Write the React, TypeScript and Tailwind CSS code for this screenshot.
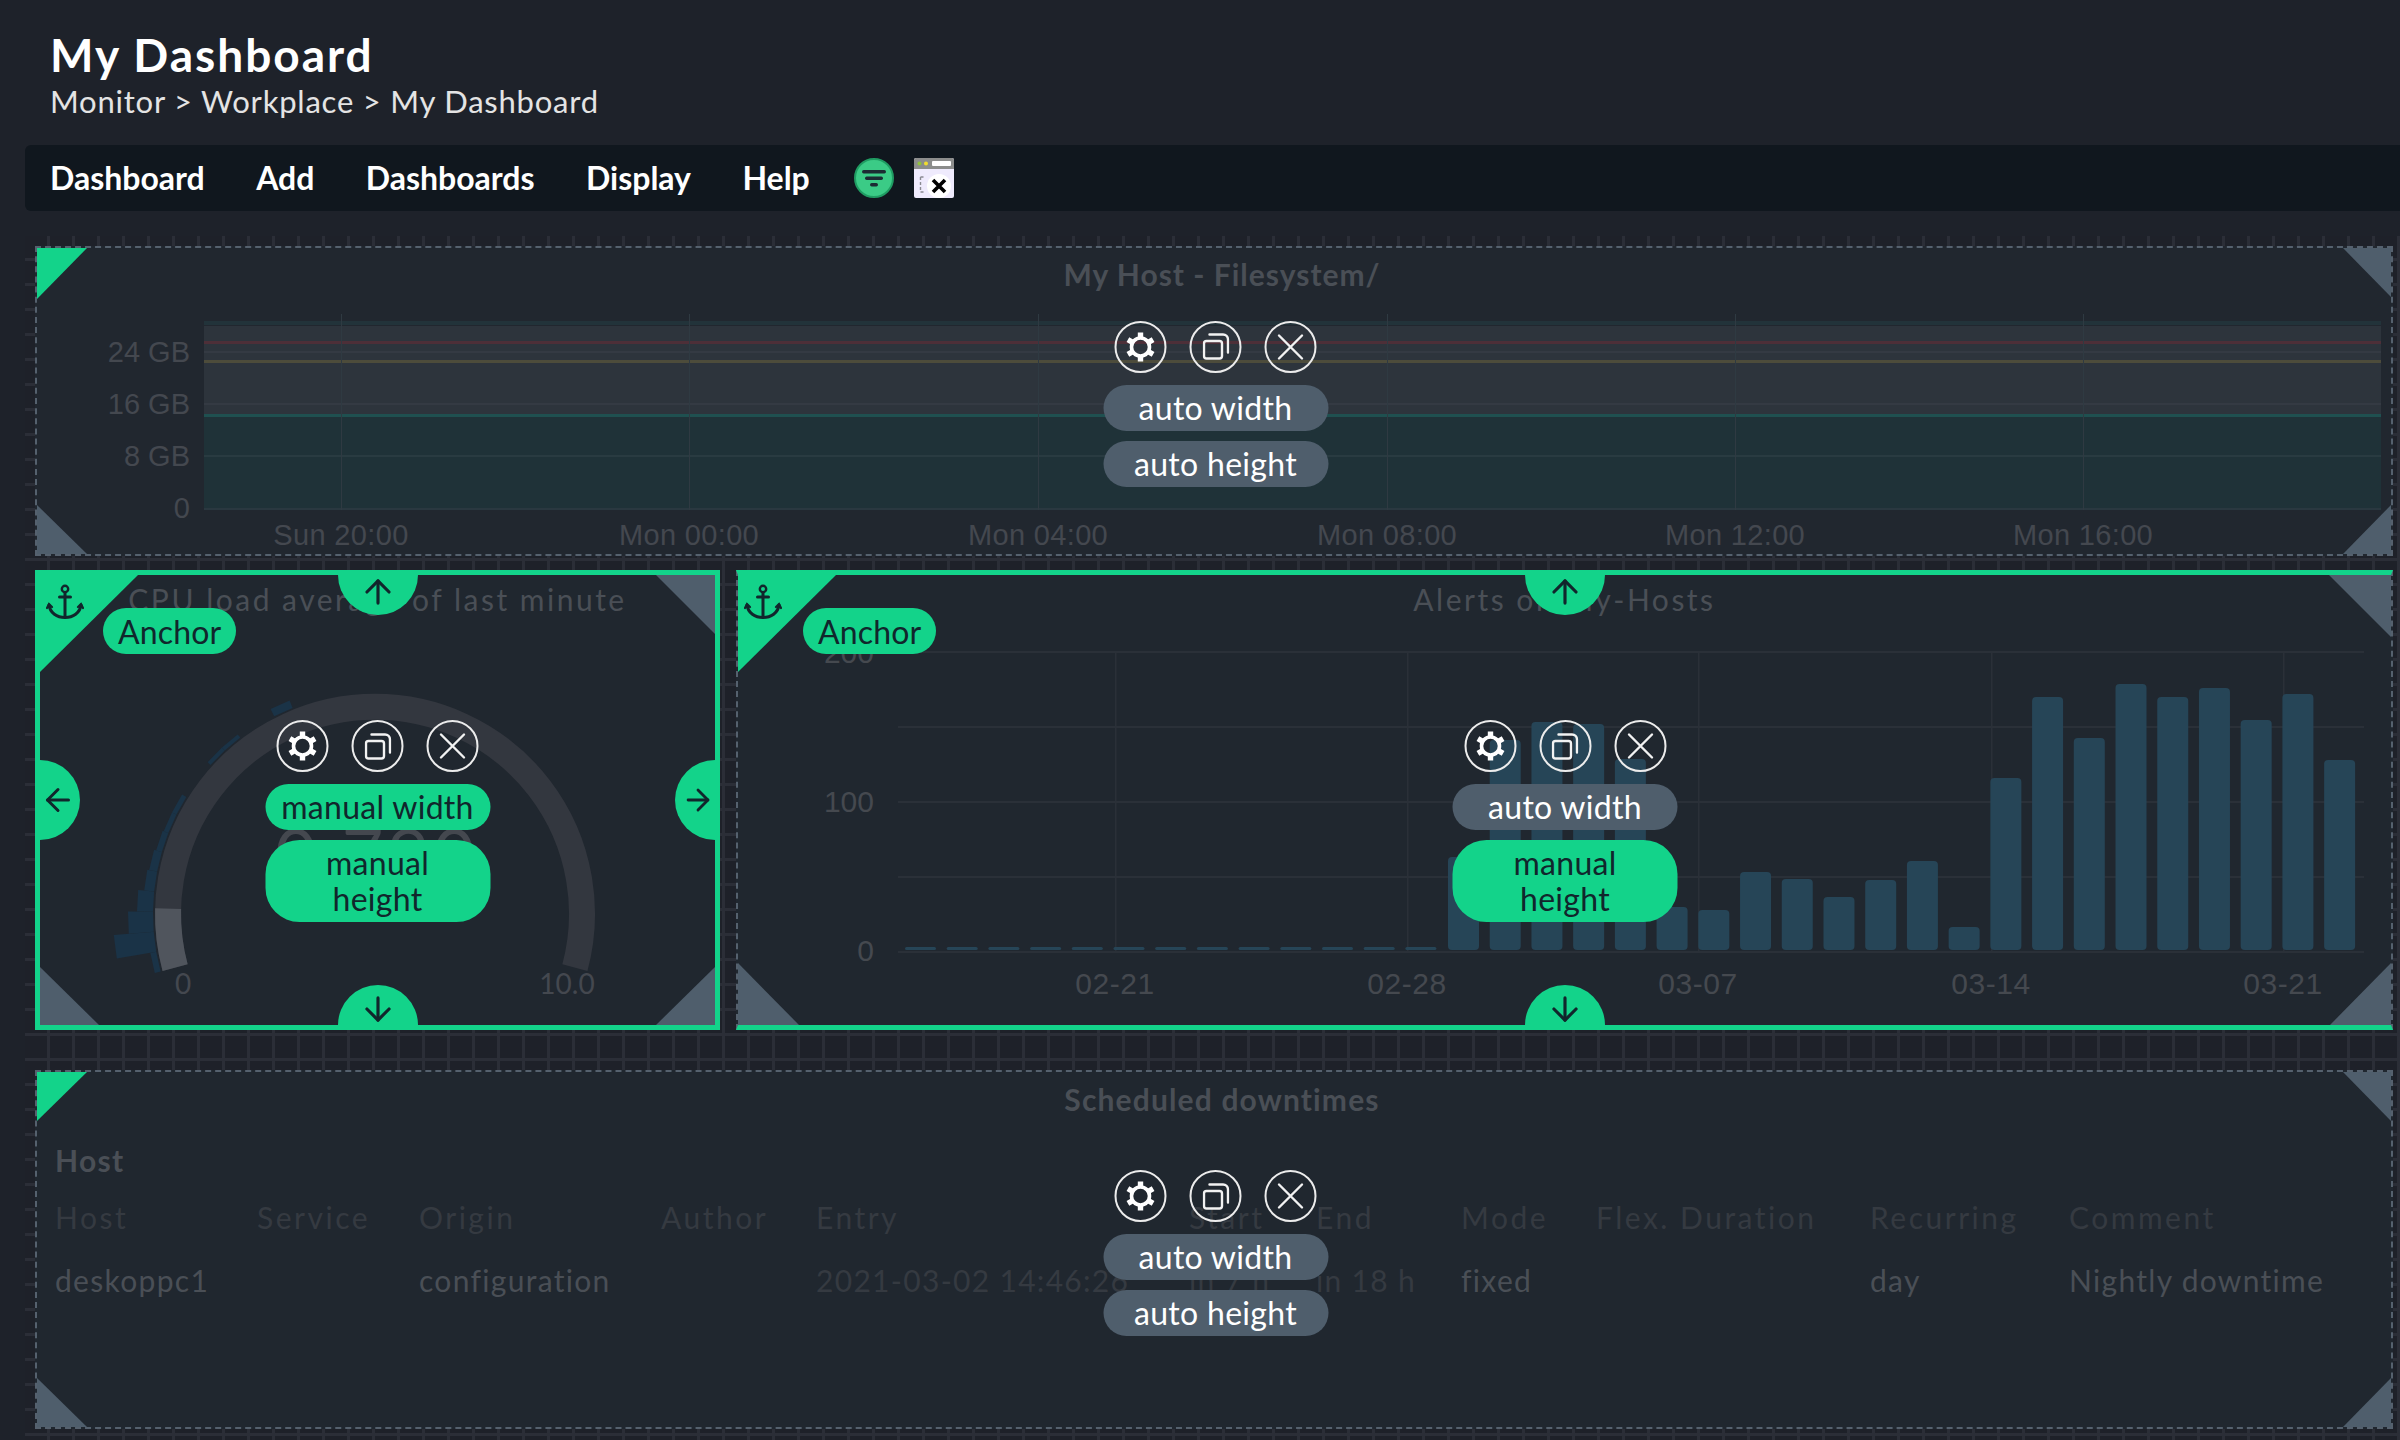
import type { ReactNode } from "react";
import { ArrowDown, ArrowLeft, ArrowRight, ArrowUp } from "lucide-react";

const chartFont = "Liberation Sans, Arial, sans-serif";

const fsTimes = [
  { x: 341, label: "Sun 20:00" },
  { x: 689, label: "Mon 00:00" },
  { x: 1038, label: "Mon 04:00" },
  { x: 1387, label: "Mon 08:00" },
  { x: 1735, label: "Mon 12:00" },
  { x: 2083, label: "Mon 16:00" },
];

const alertBars = [858, 741, 723, 725, 760, 908, 911, 873, 880, 898, 881, 862, 928, 779, 698, 739, 685, 698, 689, 721, 695, 761];

const alertDates = [
  { x: 1115, label: "02-21" },
  { x: 1407, label: "02-28" },
  { x: 1698, label: "03-07" },
  { x: 1991, label: "03-14" },
  { x: 2283, label: "03-21" },
];

const gaugeBins: [number, number][] = [
  [0, 6], [1, 40], [2, 25], [3, 16], [4, 10], [5, 8], [6, 6], [7, 5], [8, 5], [11, 4], [12, 4], [15, 8],
];

const columns = [
  { head: "Host", value: "deskoppc1", dim: false },
  { head: "Service", value: "", dim: false },
  { head: "Origin", value: "configuration", dim: false },
  { head: "Author", value: "", dim: false },
  { head: "Entry", value: "2021-03-02 14:46:26", dim: true },
  { head: "Start", value: "in 7 h", dim: true },
  { head: "End", value: "in 18 h", dim: true },
  { head: "Mode", value: "fixed", dim: false },
  { head: "Flex. Duration", value: "", dim: false },
  { head: "Recurring", value: "day", dim: false },
  { head: "Comment", value: "Nightly downtime", dim: false },
];

// angle is measured from the left horizontal, positive is below it
function polar(r: number, deg: number) {
  const a = (deg * Math.PI) / 180;
  return `${(375 - r * Math.cos(a)).toFixed(1)} ${(915 + r * Math.sin(a)).toFixed(1)}`;
}

function Corner({ pos, w, h, green }: { pos: "tl" | "tr" | "bl" | "br"; w: number; h: number; green?: boolean }) {
  const points = {
    tl: `0,0 ${w},0 0,${h}`,
    tr: `0,0 ${w},0 ${w},${h}`,
    bl: `0,0 ${w},${h} 0,${h}`,
    br: `${w},0 ${w},${h} 0,${h}`,
  }[pos];
  const place = {
    tl: "left-0 top-0",
    tr: "right-0 top-0",
    bl: "left-0 bottom-0",
    br: "right-0 bottom-0",
  }[pos];
  return (
    <svg className={`absolute ${place}`} width={w} height={h}>
      <polygon points={points} fill={green ? "#13d38a" : "#4f5e6c"} />
    </svg>
  );
}

function AnchorIcon() {
  return (
    <svg className="absolute left-[6px] top-[9px]" width="38" height="36" viewBox="0 0 38 36" fill="none" stroke="#11262c" strokeWidth="3" strokeLinecap="round">
      <circle cx="19" cy="5" r="3.2" strokeWidth="2.4" />
      <path d="M19 9v24M13.5 13h11" />
      <path d="M3 21c1 8 8 12.5 16 12.5S34 29 35 21" />
      <path d="M1 24l2-4 3 3M37 24l-2-4-3 3" strokeWidth="2.2" />
    </svg>
  );
}

function GearIcon() {
  return (
    <svg width="30" height="30" viewBox="0 0 30 30" fill="none" stroke="#fff">
      <circle cx="15" cy="15" r="9" strokeWidth="3.6" />
      <path d="M15 0.5v6M15 23.5v6M2.4 7.7l5.2 3M22.4 19.3l5.2 3M2.4 22.3l5.2-3M22.4 10.7l5.2-3" strokeWidth="5.4" />
    </svg>
  );
}

function CopyIcon() {
  return (
    <svg width="27" height="27" viewBox="0 0 27 27" fill="none" stroke="#f2f2f2" strokeWidth="2.4" strokeLinecap="round">
      <rect x="1.5" y="8" width="18" height="17.5" rx="2.5" />
      <path d="M7 1.5h13.5a5 5 0 0 1 5 5v13" />
    </svg>
  );
}

function CloseIcon() {
  return (
    <svg width="28" height="28" viewBox="0 0 28 28" stroke="#f2f2f2" strokeWidth="2.4" strokeLinecap="round">
      <path d="M2.5 2.5l23 23M25.5 2.5l-23 23" />
    </svg>
  );
}

function Round({ children }: { children: ReactNode }) {
  return <div className="flex h-[52px] w-[52px] items-center justify-center rounded-full border-[2.5px] border-[#ececec]">{children}</div>;
}

function Controls({ place, manualWidth, manualHeight }: { place: string; manualWidth?: boolean; manualHeight?: boolean }) {
  const on = "bg-[#13d38a] text-[#11262c]";
  const off = "bg-[#4f5e6c] text-white";
  return (
    <div className={`absolute flex w-[225px] -translate-x-1/2 flex-col items-center ${place}`}>
      <div className="flex gap-[23px]">
        <Round><GearIcon /></Round>
        <Round><CopyIcon /></Round>
        <Round><CloseIcon /></Round>
      </div>
      <div className={`mt-[12px] flex h-[46px] w-full items-center justify-center rounded-[23px] text-[32px] tracking-[0.3px] ${manualWidth ? on : off}`}>
        {manualWidth ? "manual width" : "auto width"}
      </div>
      {manualHeight ? (
        <div className={`mt-[10px] flex h-[82px] w-full items-center justify-center rounded-[34px] text-center text-[32px] leading-[36px] tracking-[0.3px] ${on}`}>
          manual<br />height
        </div>
      ) : (
        <div className={`mt-[10px] flex h-[46px] w-full items-center justify-center rounded-[23px] text-[32px] tracking-[0.3px] ${off}`}>
          auto height
        </div>
      )}
    </div>
  );
}

function AnchorBadge({ left }: { left: string }) {
  return (
    <>
      <Corner pos="tl" w={98} h={97} green />
      <AnchorIcon />
      <div className={`absolute top-[33px] flex h-[46px] items-center rounded-[23px] bg-[#13d38a] px-[15px] pt-[1px] text-[32px] tracking-[0.15px] text-[#11262c] ${left}`}>
        Anchor
      </div>
    </>
  );
}

function Handle({ side }: { side: "top" | "bottom" | "left" | "right" }) {
  const arrow = { size: 38, strokeWidth: 2, color: "#11262c" };
  if (side === "top")
    return (
      <div className="absolute left-1/2 top-0 flex h-[40px] w-[80px] -translate-x-1/2 items-center justify-center rounded-b-[40px] bg-[#13d38a] pb-[6px]">
        <ArrowUp {...arrow} />
      </div>
    );
  if (side === "bottom")
    return (
      <div className="absolute bottom-0 left-1/2 flex h-[40px] w-[80px] -translate-x-1/2 items-center justify-center rounded-t-[40px] bg-[#13d38a] pt-[8px]">
        <ArrowDown {...arrow} />
      </div>
    );
  if (side === "left")
    return (
      <div className="absolute left-0 top-1/2 flex h-[80px] w-[40px] -translate-y-1/2 items-center justify-center rounded-r-[40px] bg-[#13d38a] pr-[4px]">
        <ArrowLeft {...arrow} />
      </div>
    );
  return (
    <div className="absolute right-0 top-1/2 flex h-[80px] w-[40px] -translate-y-1/2 items-center justify-center rounded-l-[40px] bg-[#13d38a] pl-[6px]">
      <ArrowRight {...arrow} />
    </div>
  );
}

function Title({ children, extra }: { children: ReactNode; extra: string }) {
  return <div className={`flex items-center justify-center text-[30px] text-[#4a4f56] ${extra}`}>{children}</div>;
}

function FilesystemChart() {
  return (
    <svg className="block" width="2354" height="252" viewBox="37 301 2354 252" fontFamily={chartFont} fontSize="29" fill="#44484f">
      <rect x="204" y="327" width="2177" height="89" fill="#2d343c" />
      <rect x="204" y="416" width="2177" height="94" fill="#1f3238" />
      <rect x="204" y="322" width="2177" height="4" fill="#22333a" />
      <rect x="204" y="342" width="2177" height="3" fill="#4d2f38" />
      <rect x="204" y="361" width="2177" height="3" fill="#4d4c3b" />
      <rect x="204" y="415" width="2177" height="3" fill="#1f5050" />
      <rect x="204" y="352" width="2177" height="2" fill="#343a43" />
      <rect x="204" y="404" width="2177" height="2" fill="#343a43" />
      <rect x="204" y="456" width="2177" height="2" fill="#293b41" />
      <rect x="204" y="509" width="2177" height="2" fill="#2a3840" />
      {fsTimes.map((t) => (
        <g key={t.label}>
          <rect x={t.x} y="315" width="1" height="196" fill="#2f3a42" />
          <text x={t.x} y="546" textAnchor="middle" letterSpacing="0.35">{t.label}</text>
        </g>
      ))}
      <text x="190" y="363" textAnchor="end">24 GB</text>
      <text x="190" y="415" textAnchor="end">16 GB</text>
      <text x="190" y="467" textAnchor="end">8 GB</text>
      <text x="190" y="519" textAnchor="end">0</text>
    </svg>
  );
}

function GaugeChart() {
  return (
    <svg className="block" width="675" height="402" viewBox="40 624 675 402" fill="none">
      {gaugeBins.map(([i, h]) => {
        const a0 = 15 - 5.2 * i;
        const a1 = a0 - 5.2;
        const r = 222;
        return (
          <polygon key={i} fill="#1a3347" points={`${polar(r, a0)} ${polar(r + h, a0)} ${polar(r + h, a1)} ${polar(r, a1)}`.replace(/(\S+ \S+) /g, "$1,")} />
        );
      })}
      <path d={`M${polar(207, 15)} A207 207 0 1 1 ${polar(207, 165)}`} stroke="#33373f" strokeWidth="26" />
      <path d={`M${polar(207, 15)} A207 207 0 0 1 ${polar(207, -1.5)}`} stroke="#50555d" strokeWidth="26" />
      <text x="183" y="995" textAnchor="middle" fontFamily="Lato, sans-serif" fontSize="28" fill="#44484f">0</text>
      <text x="567" y="995" textAnchor="middle" fontFamily="Lato, sans-serif" fontSize="28" fill="#44484f">10.0</text>
      <text x="377" y="882" textAnchor="middle" fontFamily="Lato, sans-serif" fontSize="72" letterSpacing="4" fill="#44484f">0.790</text>
    </svg>
  );
}

function AlertsChart() {
  return (
    <svg className="block" width="1653" height="402" viewBox="738 624 1653 402" fontFamily={chartFont} fontSize="30" fill="#45494f">
      {[652, 727, 802, 877, 952].map((y) => (
        <rect key={y} x="898" y={y} width="1466" height="2" fill="#2a3038" />
      ))}
      {alertDates.map((d) => (
        <g key={d.label}>
          <rect x={d.x} y="652" width="1.5" height="300" fill="#2a3038" />
          <text x={d.x} y="995" textAnchor="middle" letterSpacing="0.6">{d.label}</text>
        </g>
      ))}
      {Array.from({ length: 13 }, (_, i) => (
        <rect key={i} x={905 + i * 41.7} y="948" width="31" height="3" rx="1.5" fill="#264557" />
      ))}
      {alertBars.map((top, i) => (
        <rect key={i} x={1448 + i * 41.72} y={top} width="31" height={951 - top} rx="4" fill="#264557" />
      ))}
      <text x="874" y="664" textAnchor="end">200</text>
      <text x="874" y="813" textAnchor="end">100</text>
      <text x="874" y="962" textAnchor="end">0</text>
    </svg>
  );
}

function NavIcons() {
  return (
    <div className="ml-[44px] flex items-center gap-[20px]">
      <svg width="40" height="40" viewBox="0 0 40 40">
        <circle cx="20" cy="20" r="19" fill="#3bcb86" stroke="#1f9c62" strokeWidth="2" />
        <rect x="8" y="12" width="24" height="3.5" rx="1.7" fill="#1c2b33" />
        <rect x="11" y="18.5" width="18" height="3.5" rx="1.7" fill="#1c2b33" />
        <rect x="16" y="25" width="8" height="3.5" rx="1.7" fill="#1c2b33" />
      </svg>
      <svg width="40" height="40" viewBox="0 0 40 40">
        <rect width="40" height="40" rx="2" fill="#efebfd" />
        <path d="M0 11V2a2 2 0 0 1 2-2h36a2 2 0 0 1 2 2v9z" fill="#8c8d8c" />
        <circle cx="5.5" cy="5.5" r="2" fill="#8fc23c" />
        <circle cx="12" cy="5.5" r="2" fill="#f2dc2e" />
        <rect x="18" y="3" width="19" height="5" rx="1" fill="#fff" />
        <path d="M6.5 19v15h5M6.5 19h5" fill="none" stroke="#8b8b93" strokeWidth="1.4" strokeDasharray="3 2" />
        <circle cx="25" cy="28" r="12" fill="#fff" />
        <path d="M19 22l12 12M31 22L19 34" stroke="#000" strokeWidth="3.6" />
      </svg>
    </div>
  );
}

export default function App() {
  return (
    <div className="h-[1440px] w-[2400px] overflow-hidden bg-[#1e222a] font-['Lato',sans-serif] text-white">
      <div className="h-[145px] pl-[50px] pt-[28px]">
        <h1 className="text-[46px] font-bold leading-[54px] tracking-[2px]">My Dashboard</h1>
        <div className="text-[31px] leading-[38px] tracking-[0.78px] text-[#e4e4e4]">Monitor &gt; Workplace &gt; My Dashboard</div>
      </div>

      <nav className="ml-[25px] flex h-[66px] items-center gap-[51.4px] rounded-l-[6px] bg-[#10171e] pl-[25px] text-[32px] font-bold">
        <span>Dashboard</span>
        <span>Add</span>
        <span>Dashboards</span>
        <span>Display</span>
        <span>Help</span>
        <div className="-ml-[51px]"><NavIcons /></div>
      </nav>

      <div className="ml-[25px] mt-[25px] h-[1204px] bg-[#1e2129] bg-[linear-gradient(to_right,transparent_22px,#2b2e37_22px,#2b2e37_25px),linear-gradient(to_bottom,transparent_22px,#2b2e37_22px,#2b2e37_25px)] bg-[size:25px_25px] pl-[10px] pt-[10px]">
        <section className="relative h-[310px] w-[2358px] border-2 border-dashed border-[#55616e] bg-[#21272f]">
          <Title extra="h-[52px] pl-[16px] font-bold tracking-[1px]">My Host - Filesystem/</Title>
          <FilesystemChart />
          <Corner pos="tl" w={50} h={51} green />
          <Corner pos="tr" w={48} h={49} />
          <Corner pos="bl" w={50} h={49} />
          <Corner pos="br" w={48} h={49} />
          <Controls place="left-[calc(50%+1.5px)] top-[72.5px]" />
        </section>

        <div className="mt-[14px] flex gap-[16px]">
          <section className="relative h-[460px] w-[685px] border-[5px] border-[#13d38a] bg-[#20272f]">
            <Title extra="h-[48px] tracking-[2.5px]">CPU load average of last minute</Title>
            <GaugeChart />
            <AnchorBadge left="left-[63px]" />
            <Corner pos="tr" w={59} h={59} />
            <Corner pos="bl" w={59} h={58} />
            <Corner pos="br" w={59} h={58} />
            <Handle side="top" />
            <Handle side="bottom" />
            <Handle side="left" />
            <Handle side="right" />
            <Controls place="left-1/2 top-[145px]" manualWidth manualHeight />
          </section>

          <section className="relative h-[460px] w-[1657px] border-x-2 border-y-[5px] border-x-[#55616e] border-y-[#13d38a] bg-[#20272f] [border-left-style:dashed] [border-right-style:dashed]">
            <Title extra="h-[48px] tracking-[2.5px]">Alerts on My-Hosts</Title>
            <AlertsChart />
            <AnchorBadge left="left-[65px]" />
            <Corner pos="tr" w={62} h={62} />
            <Corner pos="bl" w={61} h={62} />
            <Corner pos="br" w={61} h={62} />
            <Handle side="top" />
            <Handle side="bottom" />
            <Controls place="left-[calc(50%+0.5px)] top-[145px]" manualHeight />
          </section>
        </div>

        <section className="relative mt-[40px] h-[359px] w-[2358px] border-2 border-dashed border-[#55616e] bg-[#20272f]">
          <Title extra="h-[54px] pl-[16px] font-bold tracking-[1.15px]">Scheduled downtimes</Title>
          <div className="pl-[18px] text-[30px] leading-[40px] tracking-[1.3px]">
            <div className="mt-[14px] font-bold text-[#4a4f56]">Host</div>
            <div className="mt-[17px] grid grid-cols-[202px_162px_242px_155px_373px_127px_145px_135px_274px_199px_1fr] tracking-[2.5px] text-[#353a41]">
              {columns.map((c) => (
                <div key={c.head}>{c.head}</div>
              ))}
            </div>
            <div className="mt-[23px] grid grid-cols-[202px_162px_242px_155px_373px_127px_145px_135px_274px_199px_1fr]">
              {columns.map((c) => (
                <div key={c.head} className={c.dim ? "text-[#353a41]" : "text-[#4a4f56]"}>{c.value}</div>
              ))}
            </div>
          </div>
          <Corner pos="tl" w={50} h={49} green />
          <Corner pos="tr" w={48} h={49} />
          <Corner pos="bl" w={50} h={49} />
          <Corner pos="br" w={48} h={49} />
          <Controls place="left-[calc(50%+1.5px)] top-[98px]" />
        </section>
      </div>
    </div>
  );
}
